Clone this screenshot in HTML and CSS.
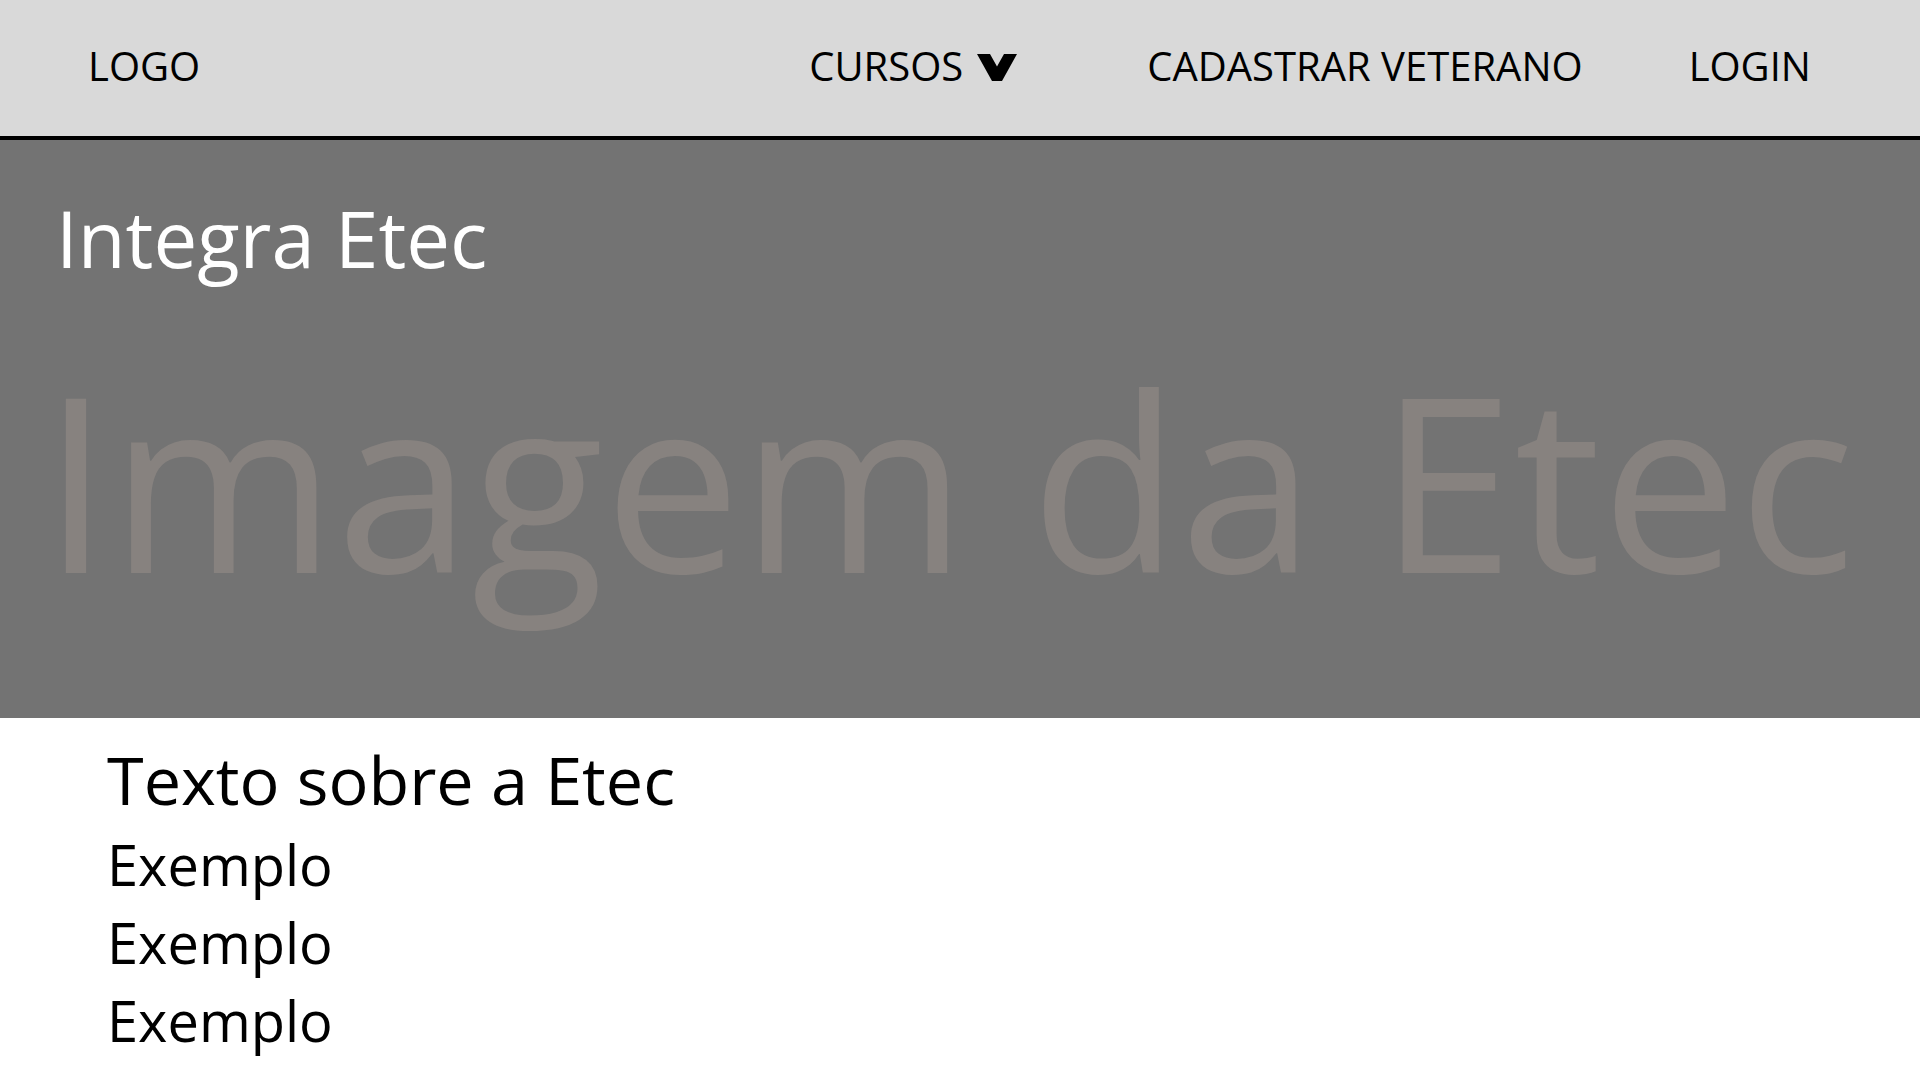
FILE: index.html
```html
<!DOCTYPE html>
<html lang="pt-BR">
<head>
<meta charset="utf-8">
<title>Integra Etec</title>
<link rel="stylesheet" href="styles.css">
</head>
<body>
<header class="topbar">
  <div class="logo">LOGO</div>
  <nav class="nav">
    <a class="nav-item cursos" href="#">CURSOS
      <svg class="chev" width="40" height="27" viewBox="0 0 40 27"><polygon points="0,0 13,0 20,12.6 27,0 40,0 25,27 15,27" fill="#000"/></svg>
    </a>
    <a class="nav-item cadastrar" href="#">CADASTRAR VETERANO</a>
    <a class="nav-item login" href="#">LOGIN</a>
  </nav>
</header>
<section class="hero">
  <h1 class="hero-title">Integra Etec</h1>
  <div class="hero-image">Imagem da Etec</div>
</section>
<main class="content">
  <h2 class="content-title">Texto sobre a Etec</h2>
  <p class="item">Exemplo</p>
  <p class="item">Exemplo</p>
  <p class="item">Exemplo</p>
</main>
</body>
</html>
```
FILE: styles.css
```css
html, body {
  margin: 0;
  padding: 0;
  background: #ffffff;
  font-family: "Open Sans", "Noto Sans", sans-serif;
  color: #000;
}
.topbar {
  box-sizing: border-box;
  height: 140px;
  background: #d9d9d9;
  border-bottom: 4px solid #000;
  display: flex;
  align-items: center;
  padding: 0 109px 5px 88px;
  font-size: 40px;
}
.logo {
  line-height: normal;
}
.nav {
  margin-left: auto;
  display: flex;
  align-items: center;
}
.nav-item {
  color: #000;
  text-decoration: none;
  line-height: normal;
  display: flex;
  align-items: center;
}
.chev {
  margin-left: 14px;
  margin-top: 3px;
}
.cadastrar {
  margin-left: 130px;
}
.login {
  margin-left: 106px;
}
.hero {
  background: #737373;
  height: 578px;
  overflow: hidden;
  padding-top: 45px;
  box-sizing: border-box;
}
.hero-title {
  margin: 0;
  padding-left: 56px;
  font-size: 78px;
  font-weight: 400;
  color: #ffffff;
  line-height: 106px;
}
.hero-image {
  padding-left: 42px;
  margin-top: 21px;
  font-size: 244px;
  line-height: 332px;
  color: #87827f;
  white-space: nowrap;
}
.content {
  padding: 15px 0 0 107px;
}
.content-title {
  margin: 0;
  font-size: 66.5px;
  font-weight: 400;
  line-height: 92px;
}
.item {
  margin: 0;
  font-size: 56px;
  line-height: 78px;
}
```
